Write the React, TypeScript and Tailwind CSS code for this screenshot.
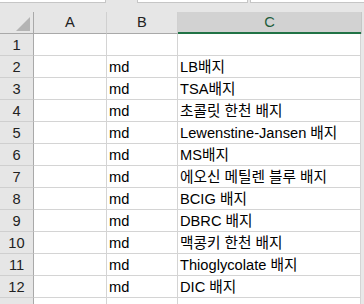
const rows: [string, string][] = [
  ['', ''],
  ['md', 'LB배지'],
  ['md', 'TSA배지'],
  ['md', '초콜릿 한천 배지'],
  ['md', 'Lewenstine-Jansen 배지'],
  ['md', 'MS배지'],
  ['md', '에오신 메틸렌 블루 배지'],
  ['md', 'BCIG 배지'],
  ['md', 'DBRC 배지'],
  ['md', '맥콩키 한천 배지'],
  ['md', 'Thioglycolate 배지'],
  ['md', 'DIC 배지'],
  ['', ''],
];

export default function App() {
  return (
    <div className="w-[364px] h-[304px] overflow-hidden bg-white text-[14.67px] font-['Liberation_Sans','Noto_Sans_CJK_KR',sans-serif]">
      {/* formula bar remnants */}
      <div className="relative h-[12px] bg-[#e6e6e6]">
        <div className="absolute left-0 top-0 w-[106px] h-[3px] bg-white border-r border-b border-[#c6c6c6]" />
        <div className="absolute left-[137px] top-0 w-[111px] h-[3px] bg-white border-l border-r border-b border-[#c6c6c6]" />
        <div className="absolute left-[250px] top-0 w-[114px] h-[3px] bg-white border-l border-b border-[#c6c6c6]" />
      </div>

      <div className="grid grid-cols-[34px_73px_71px_183px_3px]">
        {/* column headers */}
        <div className="relative h-[22px] bg-[#e6e6e6] border-r border-b border-[#a9a9a9]">
          <svg className="absolute left-[16px] top-[5px]" width="14" height="14" viewBox="0 0 14 14">
            <polygon points="14,0 14,14 0,14" fill="#b4b4b4" />
          </svg>
        </div>
        <div className="h-[22px] bg-[#e6e6e6] border-r border-b border-r-[#d0d0d0] border-b-[#a9a9a9] flex justify-center leading-[21px] text-[#222]">A</div>
        <div className="h-[22px] bg-[#e6e6e6] border-r border-b border-r-[#d0d0d0] border-b-[#a9a9a9] flex justify-center leading-[21px] text-[#222]">B</div>
        <div className="h-[22px] bg-[#d2d2d2] border-b-2 border-[#217346] flex justify-center leading-[21px] text-[#1e5e3c]">C</div>
        <div className="h-[22px] bg-[#e6e6e6] border-l border-[#c6c6c6]" />

        {rows.map(([b, c], i) => (
          <Row key={i} n={i < 12 ? String(i + 1) : ''} b={b} c={c} />
        ))}
      </div>
    </div>
  );
}

function Row({ n, b, c }: { n: string; b: string; c: string }) {
  return (
    <>
      <div className="h-[22px] bg-[#e6e6e6] border-r border-b border-r-[#a9a9a9] border-b-[#cfcfcf] text-center leading-[22px] text-[#222]">
        {n}
      </div>
      <div className="h-[22px] border-r border-b border-[#d4d4d4]" />
      <div className="h-[22px] border-r border-b border-[#d4d4d4] pl-[2px] leading-[22px] text-black whitespace-nowrap">{b}</div>
      <div className="h-[22px] border-r border-b border-[#d4d4d4] pl-[2px] leading-[22px] text-black whitespace-nowrap">{c}</div>
      <div className="h-[22px] bg-[#e8e8e8]" />
    </>
  );
}
